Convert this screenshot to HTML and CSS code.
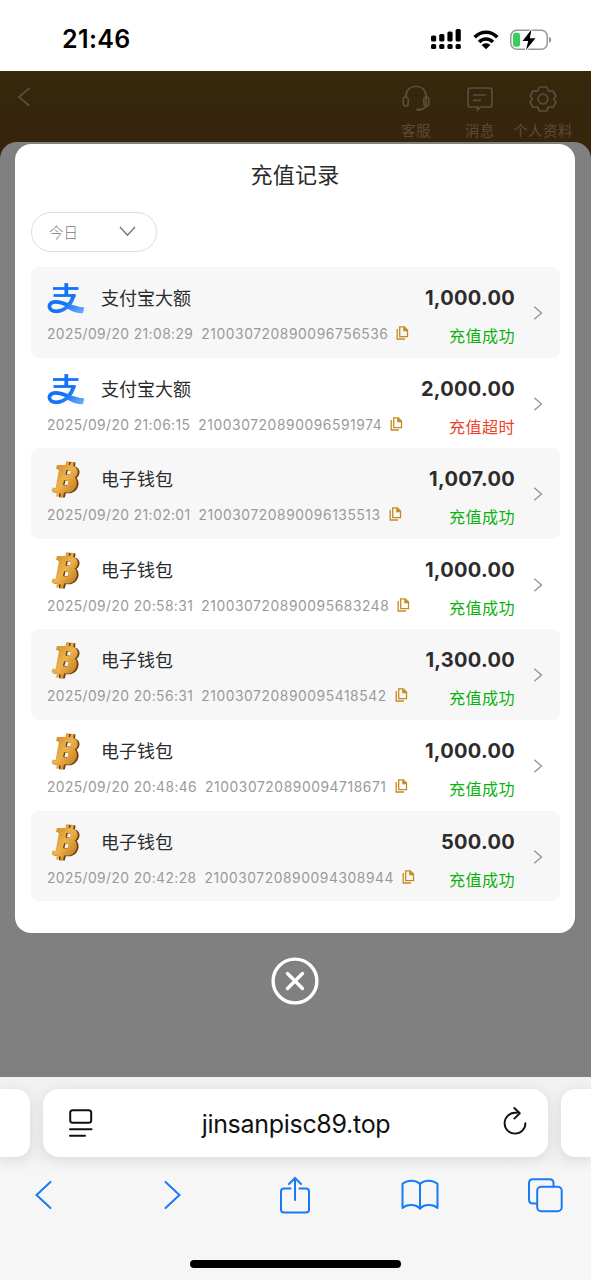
FILE: index.html
```html
<!DOCTYPE html>
<html lang="zh-CN">
<head>
<meta charset="utf-8">
<title>充值记录</title>
<link rel="stylesheet" href="styles.css">
</head>
<body>
<svg class="defs" aria-hidden="true">
  <defs>
    <linearGradient id="blue" gradientUnits="userSpaceOnUse" x1="14" y1="8" x2="37" y2="32"><stop offset=".4" stop-color="#1273f8"/><stop offset="1" stop-color="#75b1fa"/></linearGradient>
    <linearGradient id="gold" x1="0" y1="0" x2="1" y2="1"><stop offset="0" stop-color="#c98320"/><stop offset=".5" stop-color="#edb24d"/><stop offset="1" stop-color="#b87016"/></linearGradient>
  </defs>
  <symbol id="alipay" viewBox="0 -1.3 38 37">
    <g fill="none" stroke="url(#blue)">
      <path stroke-width="2.8" d="M6 7.200H31.500"/>
      <path stroke-width="3.800" d="M19.300 1.800V14"/>
      <path stroke-width="2.800" d="M6.500 14.200H28.500"/>
      <path stroke-width="3.800" d="M27 13.200C25 21 19 30 9.500 30C.4 30-.1 20.800 8.500 20.600C17 20.300 24 27 36.500 27.900"/>
    </g>
    <path fill="url(#blue)" d="M22 23.800C27 25.800 31 26.600 37.200 26.300L36 32C30 32.500 23 29 18.500 26.500Z"/>
  </symbol>
  <symbol id="bitcoin" viewBox="0 0 38 37">
    <path fill="#70400f" fill-rule="evenodd" d="M12 4.600L20 4.600L21 .8L24 1L23.700 4L25 4.200L26 1L28.500 1.600L28 5.400C33.500 7 34 13.500 29.500 17C33.300 20.500 32.300 30 23.800 32.200L18.800 32.300L17.800 36.400L12 36.200L12 32L6 31.200L7.500 27.200H10L13.500 9L11 8.500ZM20.800 9.500L20 13.300L23.500 13.800L24.500 10ZM18.500 19.800L17.500 23.800L21 24.400L22 20.200Z"/>
    <path fill="url(#gold)" fill-rule="evenodd" d="M10 4L18.300 4.200L19.300 .3L22.200 .6L21.700 3.700L23.300 4L24.200 .6L26.800 1.200L26.200 5C31.500 6.500 32.500 13 27.700 16.800C31.500 20 30.500 29.500 22.200 31.600L17 31.600L16 36.200L13.300 36L13.800 32.600H12.200L11.500 35.800L9 35.400L10 31.500L4.500 30.500L5.500 26.500L8.600 27L12 8.500L9 8ZM19.300 9L18.500 13.500L22.700 14.200L23.700 9.800ZM17 19.300L16 24L20.300 24.700L21.300 20Z"/>
  </symbol>
  <symbol id="copy" viewBox="0 0 13 14">
    <path fill="none" stroke="#c48a20" stroke-width="1.300" d="M3.700.8H8.300L11.500 4V10.600H3.700ZM1.200 3V13H9"/>
    <path fill="#c48a20" d="M7.200.5L12 5.200H7.200Z"/>
  </symbol>
  <symbol id="next" viewBox="0 0 10 14"><path fill="none" stroke="#929292" stroke-width="1.300" d="M1.300 .8L8.500 7L1.300 13.200"/></symbol>
</svg>

<header class="status-bar">
  <time class="clock">21:46</time>
  <div class="indicators">
    <svg width="30" height="21" viewBox="0 0 30 21"><g><rect x="0" y="6.500" width="5.200" height="6" rx="1.600"/><rect x="8.200" y="5" width="5.200" height="7.500" rx="1.600"/><rect x="16.400" y="2.500" width="5.200" height="10" rx="1.600"/><rect x="24.600" y="0" width="5.200" height="12.500" rx="1.600"/><rect x="0" y="15" width="5.200" height="5" rx="1.600"/><rect x="8.200" y="15" width="5.200" height="5" rx="1.600"/><rect x="16.400" y="15" width="5.200" height="5" rx="1.600"/><rect x="24.600" y="15" width="5.200" height="5" rx="1.600"/></g></svg>
    <svg width="26" height="20" viewBox="0 0 26 20"><path fill="none" stroke="#000" stroke-width="3.600" d="M1.700 7.200C8 .5 18 .5 24.300 7.200M6.100 12C10 8 16 8 19.900 12"/><path d="M8.600 14.900C11 12.700 15 12.700 17.400 14.900L13 19.300Z"/></svg>
    <svg width="42" height="22" viewBox="0 0 42 22"><rect x=".8" y="1.300" width="36.500" height="19" rx="6" fill="none" stroke="#999" stroke-width="1.500"/><path fill="#999" d="M39 7.700C42 8.500 42 13 39 13.700Z"/><rect x="3" y="3.800" width="7" height="14" rx="2.500" fill="#35ce59"/><path stroke="#fff" stroke-width="2" paint-order="stroke" d="M21.500 .5L12.500 12H18.200L16 21L25.500 9.200H19.800Z"/></svg>
  </div>
</header>

<main class="page">
  <nav class="app-nav">
    <svg class="nav-back" width="14" height="20" viewBox="0 0 14 20"><path d="M12.500 1L2 10L12.500 19"/></svg>
    <div class="nav-item support"><svg width="28" height="28" viewBox="0 0 28 28"><path d="M4 12.500V11C4 -2 24 -2 24 11V19C24 22.500 22.500 24 19 24.300"/><rect x="1.200" y="12" width="5" height="9" rx="2.500"/><rect x="21.800" y="12" width="5" height="9" rx="2.500"/><path stroke-width="2.500" d="M14.500 24.700H19"/></svg><span>客服</span></div>
    <div class="nav-item message"><svg width="28" height="28" viewBox="0 0 28 28"><path d="M4.500 3H23.500Q26 3 26 5.500V19.500Q26 22 23.500 22H14.500L11.500 25V22H4.500Q2 22 2 19.500V5.500Q2 3 4.500 3ZM7 10H20M7 15.300H15"/></svg><span>消息</span></div>
    <div class="nav-item profile"><svg width="28" height="28" viewBox="0 0 28 28"><path stroke-linejoin="round" d="M10.500 2H17.500L19.500 6.200L24 6L27 11.500L24.500 14L27 17L24 22.500L19.500 22L17.500 26H10.500L8.500 22L4 22.500L1 17L3.500 14L1 11.500L4 6L8.500 6.200Z"/><circle cx="14" cy="14" r="4.800"/></svg><span>个人资料</span></div>
  </nav>
  <div class="backdrop">
    <section class="dialog">
      <h1 class="dialog-title">充值记录</h1>
      <div class="day-filter"><span>今日</span><svg width="17" height="11" viewBox="0 0 17 11"><path fill="none" stroke="#777" stroke-width="1.500" d="M1 1L8.500 9.200L16 1"/></svg></div>
      <ul class="records">
        <li class="record"><div class="info"><div class="method"><svg class="logo"><use href="#alipay"/></svg><span>支付宝大额</span></div><div class="meta"><time>2025/09/20 21:08:29</time><span>210030720890096756536</span><svg class="copy"><use href="#copy"/></svg></div></div><div class="result"><strong>1,000.00</strong><span class="success">充值成功</span></div><svg class="next"><use href="#next"/></svg></li>
        <li class="record"><div class="info"><div class="method"><svg class="logo"><use href="#alipay"/></svg><span>支付宝大额</span></div><div class="meta"><time>2025/09/20 21:06:15</time><span>210030720890096591974</span><svg class="copy"><use href="#copy"/></svg></div></div><div class="result"><strong>2,000.00</strong><span class="timeout">充值超时</span></div><svg class="next"><use href="#next"/></svg></li>
        <li class="record"><div class="info"><div class="method"><svg class="logo"><use href="#bitcoin"/></svg><span>电子钱包</span></div><div class="meta"><time>2025/09/20 21:02:01</time><span>210030720890096135513</span><svg class="copy"><use href="#copy"/></svg></div></div><div class="result"><strong>1,007.00</strong><span class="success">充值成功</span></div><svg class="next"><use href="#next"/></svg></li>
        <li class="record"><div class="info"><div class="method"><svg class="logo"><use href="#bitcoin"/></svg><span>电子钱包</span></div><div class="meta"><time>2025/09/20 20:58:31</time><span>210030720890095683248</span><svg class="copy"><use href="#copy"/></svg></div></div><div class="result"><strong>1,000.00</strong><span class="success">充值成功</span></div><svg class="next"><use href="#next"/></svg></li>
        <li class="record"><div class="info"><div class="method"><svg class="logo"><use href="#bitcoin"/></svg><span>电子钱包</span></div><div class="meta"><time>2025/09/20 20:56:31</time><span>210030720890095418542</span><svg class="copy"><use href="#copy"/></svg></div></div><div class="result"><strong>1,300.00</strong><span class="success">充值成功</span></div><svg class="next"><use href="#next"/></svg></li>
        <li class="record"><div class="info"><div class="method"><svg class="logo"><use href="#bitcoin"/></svg><span>电子钱包</span></div><div class="meta"><time>2025/09/20 20:48:46</time><span>210030720890094718671</span><svg class="copy"><use href="#copy"/></svg></div></div><div class="result"><strong>1,000.00</strong><span class="success">充值成功</span></div><svg class="next"><use href="#next"/></svg></li>
        <li class="record"><div class="info"><div class="method"><svg class="logo"><use href="#bitcoin"/></svg><span>电子钱包</span></div><div class="meta"><time>2025/09/20 20:42:28</time><span>210030720890094308944</span><svg class="copy"><use href="#copy"/></svg></div></div><div class="result"><strong>500.00</strong><span class="success">充值成功</span></div><svg class="next"><use href="#next"/></svg></li>
      </ul>
    </section>
    <svg class="close" width="48" height="48" viewBox="0 0 48 48"><circle cx="24" cy="24" r="21.900"/><path d="M16.500 16.500L31.500 31.500M31.500 16.500L16.500 31.500"/></svg>
  </div>
</main>

<footer class="browser">
  <div class="tabs">
    <div class="tab previous"></div>
    <div class="tab address">
      <svg width="24" height="28" viewBox="0 0 24 28"><rect x="1.200" y="1.200" width="21" height="12.600" rx="2.500"/><path d="M1 20.300H22.500M1 26.700H16"/></svg>
      <span>jinsanpisc89.top</span>
      <svg width="24" height="28" viewBox="0 0 24 28"><path stroke-width="1.900" d="M14 5.800H12A10.400 10.400 0 1 0 22.400 16.200M11.300 1L16.800 6.200L11.300 11.600"/></svg>
    </div>
    <div class="tab following"></div>
  </div>
  <div class="tools">
    <svg class="tool-back" width="17" height="28" viewBox="0 0 17 28"><path d="M15.500 1L1.500 14L15.500 27"/></svg>
    <svg class="tool-forward" width="17" height="28" viewBox="0 0 17 28"><path d="M1.500 1L15.500 14L1.500 27"/></svg>
    <svg class="tool-share" width="30" height="38" viewBox="0 0 30 38"><path d="M10.500 12.500H4Q1 12.500 1 15.500V33.500Q1 36.500 4 36.500H26Q29 36.500 29 33.500V15.500Q29 12.500 26 12.500H19.500M15 24V2M9 8L15 2L21 8"/></svg>
    <svg class="tool-book" width="38" height="32" viewBox="0 0 38 32"><path stroke-linejoin="round" d="M19 5C15 .5 6 .5 1.500 5V29C6 25 15 25 19 29.800C23 25 32 25 36.500 29V5C32 .5 23 .5 19 5V29"/></svg>
    <svg class="tool-tabs" width="35" height="35" viewBox="0 0 35 35"><path d="M8.500 25.500H5Q1 25.500 1 21.500V5Q1 1.200 5 1.200H21.500Q25.500 1.200 25.500 5V8.500"/><rect x="9.200" y="8.800" width="24.500" height="24.500" rx="4"/></svg>
  </div>
  <div class="home-indicator"></div>
</footer>
</body>
</html>
```

FILE: styles.css
```css
* { box-sizing: border-box; }
body {
  width: 591px;
  height: 1280px;
  margin: 0;
  overflow: hidden;
  font-family: Inter, "Noto Sans CJK SC", sans-serif;
  background: #fff;
}
svg { display: block; flex: none; }
.defs { position: absolute; width: 0; height: 0; }

.status-bar {
  display: flex;
  justify-content: space-between;
  height: 71px;
  padding: 0 39px 0 62px;
}
.clock { font-size: 25px; font-weight: 600; line-height: 79px; letter-spacing: .4px; }
.indicators { display: flex; align-items: center; gap: 11px; height: 79px; }
.indicators svg:first-child { margin-right: 1px; }

.page { height: 1006px; background: #37250b; }
.app-nav {
  display: flex;
  height: 71px;
  padding: 14px 14px 0 17px;
  background: linear-gradient(#392a0a 0, #35260d 30%, #37250b 100%);
  color: #5b4b35;
}
.app-nav svg { fill: none; stroke: #5b4d39; stroke-width: 1.7; }
.nav-back { margin-top: 2px; }
.nav-item { display: flex; flex-direction: column; align-items: center; width: 68px; font-size: 14.5px; line-height: 20px; white-space: nowrap; gap: 8px; letter-spacing: .4px; }
.support { margin-left: auto; }
.message { margin-right: -5px; margin-left: -4px; }

.backdrop {
  display: flex;
  flex-direction: column;
  align-items: center;
  height: 935px;
  padding: 2px 1px 0 0;
  border-radius: 17px 17px 0 0;
  background: #808080;
}
.dialog { width: 560px; height: 789px; padding: 0 16px; border-radius: 16px; background: #fff; }
.dialog-title { height: 68px; margin: 0; font-size: 22px; font-weight: 400; line-height: 63px; letter-spacing: .2px; text-align: center; color: #2b2b2b; }
.day-filter {
  display: flex;
  align-items: center;
  justify-content: space-between;
  width: 126px;
  height: 40px;
  padding: 0 20px 2px 17px;
  border: 1.5px solid #dedede;
  border-radius: 20px;
  font-size: 14.5px;
  font-weight: 300;
  color: #777;
}
.records { margin: 15px 0 0; padding: 0; list-style: none; }
.record { display: flex; width: 529px; height: 90.6px; padding: 0 17px 0 16px; border-radius: 8px; }
.record:nth-child(odd) { background: #f7f7f7; }
.info { flex: 1; padding-top: 13px; }
.method { display: flex; align-items: center; gap: 16px; height: 37px; font-size: 18px; color: #2c2c2c; }
.method span { padding-bottom: 3px; }
.logo { width: 38px; height: 37px; }
.meta { display: flex; align-items: center; height: 20px; margin-top: 7px; font-size: 13.8px; letter-spacing: .58px; white-space: nowrap; color: #999; }
.meta time { letter-spacing: .42px; }
.meta span { margin-left: 8px; }
.copy { width: 13px; height: 14px; margin: -2px 0 0 8px; }
.result { display: flex; flex-direction: column; align-items: flex-end; padding-top: 16px; }
.result strong { font-size: 20px; font-weight: 700; line-height: 30px; letter-spacing: .3px; color: #2c2c2c; }
.result span { margin-top: 11px; font-size: 16.1px; line-height: 24px; letter-spacing: .4px; }
.success { color: #0ab20e; }
.timeout { color: #ef4229; }
.next { width: 10px; height: 14px; margin: 39px 0 0 18px; }
.close { margin-top: 23.500px; fill: none; stroke: #fff; stroke-width: 3.4; stroke-linecap: round; }

.browser { height: 203px; background: #f6f6f6; }
.tabs { display: flex; gap: 13px; height: 98px; padding-top: 12px; background: linear-gradient(#f2f2f2, #f0f0f0 80%, #f6f6f6); }
.tab { height: 68px; background: #fff; box-shadow: 0 2px 14px rgba(0, 0, 0, .1); }
.previous { width: 30px; border-radius: 0 14px 14px 0; }
.following { width: 30px; border-radius: 14px 0 0 14px; }
.address { display: flex; align-items: center; justify-content: space-between; width: 505px; padding: 0 21px 0 26px; border-radius: 16px; font-size: 25px; letter-spacing: -.3px; color: #111; }
.address span { position: relative; left: -2px; padding-top: 2px; }
.address svg { fill: none; stroke: #111; stroke-width: 2; stroke-linecap: round; stroke-linejoin: round; }
.address svg:last-child { margin-top: -4px; }
.tools { display: flex; align-items: center; height: 40px; padding-left: 35px; }
.tools svg { fill: none; stroke: #187bf5; stroke-width: 2; stroke-linecap: round; }
.tool-forward { margin-left: 112px; }
.tool-share { margin-left: 99px; }
.tool-book { margin-left: 91px; }
.tool-tabs { margin-left: 89px; }
.home-indicator { width: 211px; height: 8px; margin: 45px auto 0; border-radius: 4px; background: #000; }
```
